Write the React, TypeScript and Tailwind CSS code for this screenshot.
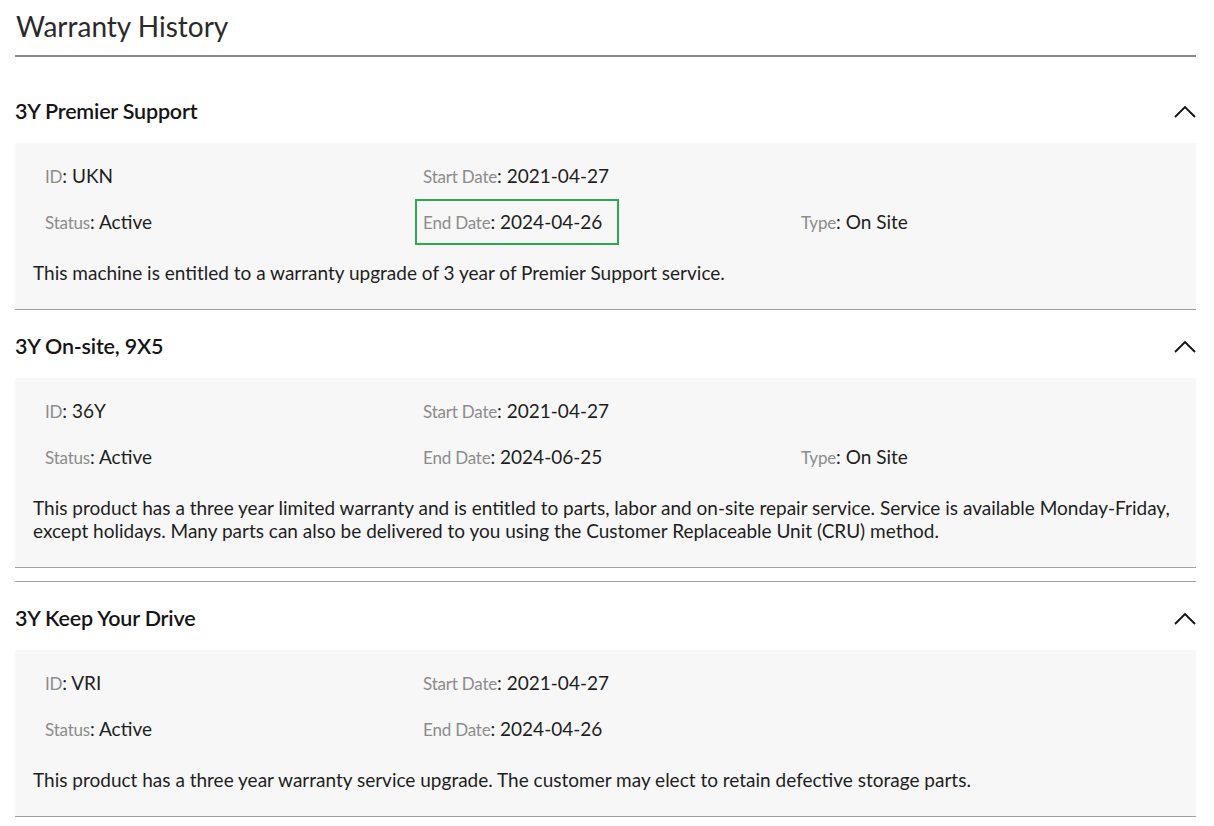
import React from 'react';

interface Field {
  label: string;
  value: string;
  highlight?: boolean;
}

interface Warranty {
  name: string;
  rows: (Field | null)[][];
  description: string;
}

const warranties: Warranty[] = [
  {
    name: '3Y Premier Support',
    rows: [
      [{ label: 'ID', value: 'UKN' }, { label: 'Start Date', value: '2021-04-27' }, null],
      [
        { label: 'Status', value: 'Active' },
        { label: 'End Date', value: '2024-04-26', highlight: true },
        { label: 'Type', value: 'On Site' },
      ],
    ],
    description: 'This machine is entitled to a warranty upgrade of 3 year of Premier Support service.',
  },
  {
    name: '3Y On-site, 9X5',
    rows: [
      [{ label: 'ID', value: '36Y' }, { label: 'Start Date', value: '2021-04-27' }, null],
      [
        { label: 'Status', value: 'Active' },
        { label: 'End Date', value: '2024-06-25' },
        { label: 'Type', value: 'On Site' },
      ],
    ],
    description:
      'This product has a three year limited warranty and is entitled to parts, labor and on-site repair service. Service is available Monday-Friday, except holidays. Many parts can also be delivered to you using the Customer Replaceable Unit (CRU) method.',
  },
  {
    name: '3Y Keep Your Drive',
    rows: [
      [{ label: 'ID', value: 'VRI' }, { label: 'Start Date', value: '2021-04-27' }, null],
      [{ label: 'Status', value: 'Active' }, { label: 'End Date', value: '2024-04-26' }, null],
    ],
    description:
      'This product has a three year warranty service upgrade. The customer may elect to retain defective storage parts.',
  },
];

function ChevronUp() {
  return (
    <svg width="22" height="13" viewBox="0 0 22 13" fill="none">
      <polyline points="1,12 11,2 21,12" stroke="#111" strokeWidth="1.8" />
    </svg>
  );
}

function FieldCell({ field }: { field: Field | null }) {
  if (!field) return <div />;
  const text = (
    <span className="whitespace-nowrap">
      <span className="text-[17px] text-[#8c8c8c] tracking-[-0.2px]">{field.label}</span>
      <span className="text-[19px] text-[#1e1e1e]">: {field.value}</span>
    </span>
  );
  return (
    <div className="flex items-center h-[46px]">
      {field.highlight ? (
        <span className="-ml-[8px] border-2 border-[#2fa84f] pl-[6px] pr-[15px] h-[46px] flex items-center">
          {text}
        </span>
      ) : (
        text
      )}
    </div>
  );
}

function WarrantySection({ w, first, separated }: { w: Warranty; first: boolean; separated: boolean }) {
  return (
    <section className={`${first ? 'mt-[18px]' : ''} ${separated ? 'mt-[13px] border-t border-[#a0a0a0]' : ''}`}>
      <div className="flex items-center justify-between h-[68px] pt-[4px]">
        <h2 className="text-[21.5px] font-semibold text-[#151515] tracking-[-0.2px]">{w.name}</h2>
        <ChevronUp />
      </div>
      <div className="bg-[#f7f7f7] border-b border-[#a0a0a0] pt-[10px] pb-[25px]">
        {w.rows.map((row, i) => (
          <div key={i} className="grid grid-cols-[378px_378px_1fr] pl-[30px]">
            {row.map((f, j) => (
              <FieldCell key={j} field={f} />
            ))}
          </div>
        ))}
        <p className="mt-[16px] px-[18px] text-[19px] leading-[23px] text-[#1e1e1e]">{w.description}</p>
      </div>
    </section>
  );
}

export default function App() {
  return (
    <div className="min-h-screen bg-white" style={{ fontFamily: 'Lato, "Noto Sans", sans-serif' }}>
      <div className="ml-[15px] w-[1181px]">
        <h1 className="h-[57px] pt-[8px] pl-[1px] text-[28px] leading-[36px] text-[#2a2a2a] border-b-2 border-[#8a8a8a]">
          Warranty History
        </h1>
        {warranties.map((w, i) => (
          <WarrantySection key={w.name} w={w} first={i === 0} separated={i === 2} />
        ))}
      </div>
    </div>
  );
}
